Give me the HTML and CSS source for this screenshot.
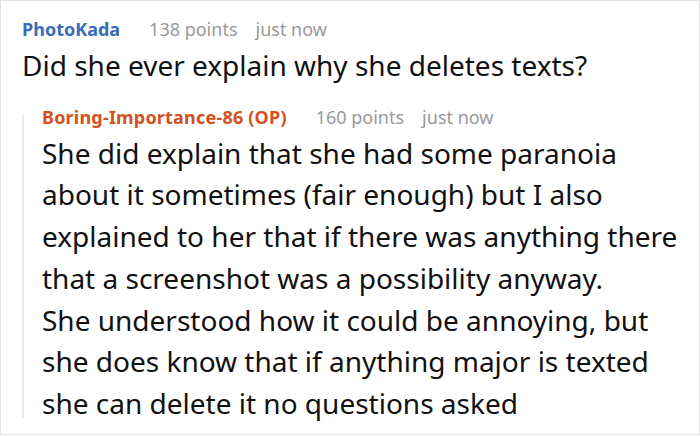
FILE: index.html
```html
<!DOCTYPE html>
<html>
<head>
<meta charset="utf-8">
<link rel="stylesheet" href="styles.css">
</head>
<body>
<div class="frame">
  <div class="comment">
    <div class="meta">
      <span class="author author-blue">PhotoKada</span>
      <span class="info">138 points</span>
      <span class="info">just now</span>
    </div>
    <p class="text text-main">Did she ever explain why she deletes texts?</p>
    <div class="reply">
      <div class="thread-line"></div>
      <div class="reply-body">
        <div class="meta">
          <span class="author author-orange">Boring-Importance-86 (OP)</span>
          <span class="info">160 points</span>
          <span class="info">just now</span>
        </div>
        <p class="text text-reply">She did explain that she had some paranoia<br>about it sometimes (fair enough) but I also<br>explained to her that if there was anything there<br>that a screenshot was a possibility anyway.<br>She understood how it could be annoying, but<br>she does know that if anything major is texted<br>she can delete it no questions asked</p>
      </div>
    </div>
  </div>
</div>
</body>
</html>
```

FILE: styles.css
```css
html, body {
  margin: 0;
  padding: 0;
  background: #fff;
}
.frame {
  box-sizing: border-box;
  width: 700px;
  height: 435px;
  border: 1px solid #e2e2e2;
  overflow: hidden;
  font-family: "Noto Sans", "Open Sans", sans-serif;
}
.comment {
  padding: 16px 0 0 21px;
}
.meta {
  display: flex;
  font-size: 18px;
  line-height: 24px;
  white-space: nowrap;
}
.author {
  font-weight: bold;
  margin-right: 29px;
}
.author-blue { color: #3b6cb7; }
.author-orange {
  color: #d4501e;
  letter-spacing: 0.2px;
}
.info {
  color: #999999;
  margin-right: 18px;
}
.text {
  margin: 0;
  color: #111111;
  font-size: 28px;
  line-height: 41.7px;
  white-space: nowrap;
}
.text-main {
  margin-top: 4px;
}
.reply {
  display: flex;
  margin-top: 18px;
}
.thread-line {
  flex: 0 0 2px;
  background: #ebebeb;
  margin: 10px 0 7px 0;
}
.reply-body {
  margin-left: 18px;
}
.text-reply {
  margin-top: 4px;
}
```
